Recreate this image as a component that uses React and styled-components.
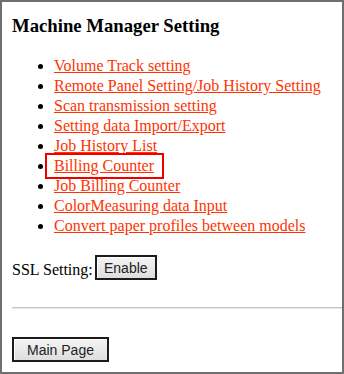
import React from 'react';
import styled, { createGlobalStyle } from 'styled-components';

const menuItems = [
  { title: 'Volume Track setting' },
  { title: 'Remote Panel Setting/Job History Setting' },
  { title: 'Scan transmission setting' },
  { title: 'Setting data Import/Export' },
  { title: 'Job History List' },
  { title: 'Billing Counter', highlight: true },
  { title: 'Job Billing Counter' },
  { title: 'ColorMeasuring data Input' },
  { title: 'Convert paper profiles between models' },
];

const GlobalStyle = createGlobalStyle`
  html, body {
    margin: 0;
    padding: 0;
    background: #ffffff;
  }
`;

const Frame = styled.div`
  width: 344px;
  height: 374px;
  box-sizing: border-box;
  border: 2px solid #6f6f6f;
  padding: 13px 0 0 10px;
  overflow: hidden;
  background: #ffffff;
  font-family: "Liberation Serif", "Times New Roman", serif;
  color: #000000;
`;

const Title = styled.h3`
  margin: 0 0 19px;
  font-size: 18.72px;
  font-weight: bold;
  line-height: normal;
`;

const MenuList = styled.ul`
  margin: 0;
  padding: 0 0 0 42px;
  list-style: disc;
`;

const MenuItem = styled.li`
  font-size: 16px;
  line-height: 20px;
`;

const MenuLink = styled.a`
  position: relative;
  color: #ff3300;
  text-decoration: underline;
  cursor: pointer;

  ${({ $highlight }) => $highlight && `
    &::after {
      content: '';
      position: absolute;
      left: -9px;
      right: -10px;
      top: -4px;
      bottom: -5px;
      border: 2px solid #ee0000;
      box-sizing: border-box;
    }
  `}
`;

const SettingRow = styled.div`
  display: flex;
  align-items: flex-start;
  gap: 2px;
  margin-top: 19px;
`;

const Label = styled.span`
  font-size: 16px;
  line-height: 20px;
  margin-top: 5px;
`;

const Button = styled.button`
  box-sizing: border-box;
  width: ${({ $width }) => $width}px;
  height: 25px;
  padding: 0;
  border: 2px solid #1c1c1c;
  background: linear-gradient(#f4f4f4, #dedede);
  box-shadow: inset 1px 1px 0 #ffffff;
  font-family: "Liberation Sans", Arial, sans-serif;
  font-size: 14px;
  color: #222222;
  cursor: pointer;
`;

const Divider = styled.hr`
  margin: 27px 0 28px;
  height: 0;
  border: none;
  border-top: 1px solid #c6c6c6;
  border-bottom: 1px solid #e6e6e6;
`;

const App = () => (
  <>
    <GlobalStyle />
    <Frame>
      <Title>Machine Manager Setting</Title>
      <MenuList>
        {menuItems.map(item => (
          <MenuItem key={item.title}>
            <MenuLink $highlight={item.highlight}>{item.title}</MenuLink>
          </MenuItem>
        ))}
      </MenuList>
      <SettingRow>
        <Label>SSL Setting:</Label>
        <Button type="button" $width={62}>Enable</Button>
      </SettingRow>
      <Divider />
      <Button type="button" $width={97}>Main Page</Button>
    </Frame>
  </>
);

export default App;
